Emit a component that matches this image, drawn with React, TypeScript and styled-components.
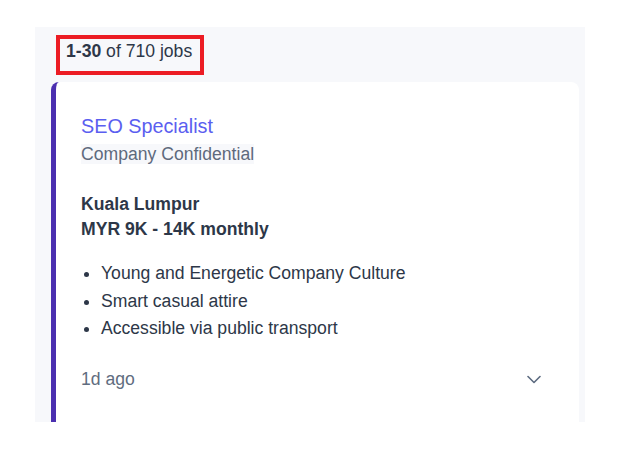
import styled, { createGlobalStyle } from "styled-components";

const GlobalStyle = createGlobalStyle`
  body {
    margin: 0;
    background: #ffffff;
    font-family: "Liberation Sans", Arial, sans-serif;
    color: #2d3748;
  }
`;

const Page = styled.div`
  padding: 27px 0 0 35px;
`;

const Panel = styled.section`
  box-sizing: border-box;
  width: 550px;
  height: 395px;
  overflow: hidden;
  background: #f7f8fb;
  padding: 8px 6px 0 16px;
`;

const Count = styled.div`
  display: inline-block;
  margin-left: 5px;
  border: 4px solid #ec1c24;
  padding: 2px 8px 10px 6px;
  font-size: 17.6px;
  line-height: 20px;
  color: #2d3748;

  strong {
    font-weight: 700;
  }
`;

const Card = styled.article`
  box-sizing: border-box;
  margin-top: 7px;
  background: #ffffff;
  border-left: 5px solid #4b2fb0;
  border-radius: 8px 8px 0 0;
  padding: 31px 38px 40px 25px;
  font-size: 17.6px;
  line-height: 27.5px;
`;

const Title = styled.a`
  display: block;
  font-size: 19.8px;
  color: #5b5ef0;
  text-decoration: none;
`;

const Company = styled.div`
  span {
    background: #f7f8fb;
    color: #5e6a7d;
  }
`;

const Meta = styled.div`
  margin-top: 24px;
  font-weight: 700;
  line-height: 24.5px;
  color: #2d3748;
`;

const Perks = styled.ul`
  margin: 19px 0 0;
  padding-left: 20px;
  color: #2d3748;
`;

const Footer = styled.div`
  margin-top: 23px;
  display: flex;
  align-items: center;
  justify-content: space-between;
`;

const Posted = styled.span`
  color: #5f6d80;
`;

const Toggle = styled.button`
  border: 0;
  background: none;
  padding: 0;
  display: flex;
  color: #5d6b80;
  cursor: pointer;
`;

const perks = [
  "Young and Energetic Company Culture",
  "Smart casual attire",
  "Accessible via public transport",
];

export default function App() {
  return (
    <>
      <GlobalStyle />
      <Page>
        <Panel>
          <Count>
            <strong>1-30</strong> of 710 jobs
          </Count>
          <Card>
            <Title href="#">SEO Specialist</Title>
            <Company>
              <span>Company Confidential</span>
            </Company>
            <Meta>
              <div>Kuala Lumpur</div>
              <div>MYR 9K - 14K monthly</div>
            </Meta>
            <Perks>
              {perks.map((p) => (
                <li key={p}>{p}</li>
              ))}
            </Perks>
            <Footer>
              <Posted>1d ago</Posted>
              <Toggle aria-label="More">
                <svg width="14" height="9" viewBox="0 0 14 9" fill="none">
                  <path
                    d="M1 1.5l6 6 6-6"
                    stroke="currentColor"
                    strokeWidth="1.6"
                    strokeLinecap="round"
                    strokeLinejoin="round"
                  />
                </svg>
              </Toggle>
            </Footer>
          </Card>
        </Panel>
      </Page>
    </>
  );
}
